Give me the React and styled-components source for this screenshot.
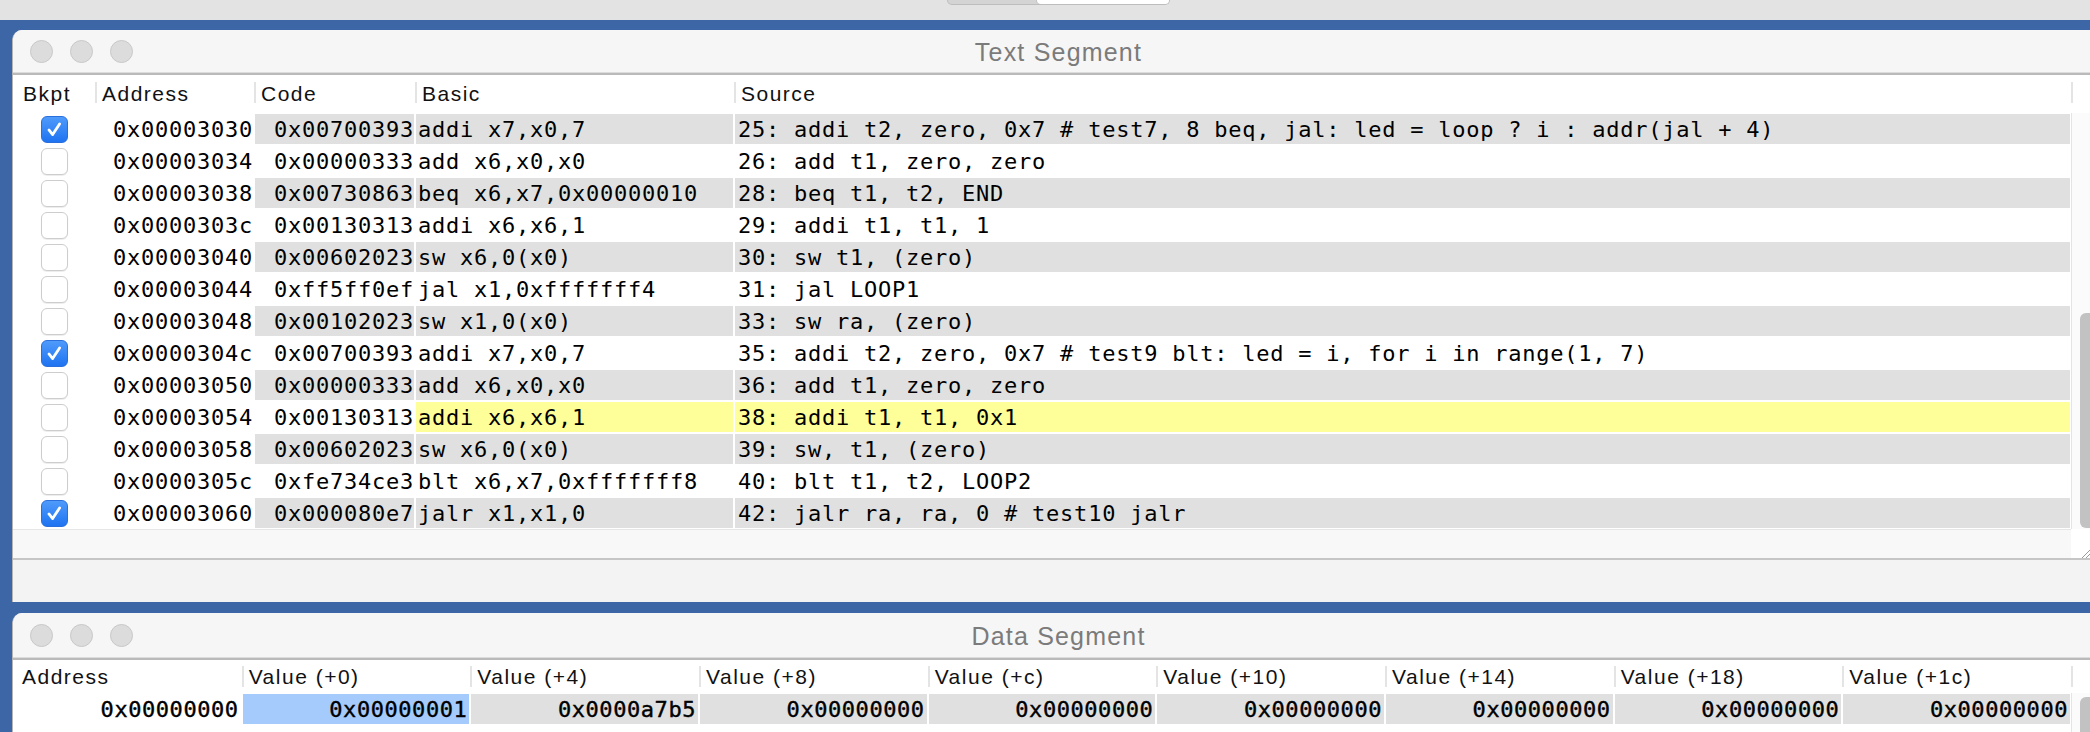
import React from 'react';
import styled, { createGlobalStyle, css } from 'styled-components';

const GlobalStyle = createGlobalStyle`
  html, body { margin: 0; padding: 0; background: #e3e3e3; overflow: hidden; }
  #root { width: 2090px; height: 732px; }
`;

const Page = styled.div`
  width: 2090px;
  height: 732px;
  display: flex;
  flex-direction: column;
  overflow: hidden;
  background: #e3e3e3;
`;

const TopStrip = styled.div`
  height: 20px;
  flex: none;
  display: flex;
  align-items: flex-start;
  padding-left: 947px;
  box-sizing: border-box;
`;

const Segmented = styled.div`
  display: flex;
  height: 5px;
  width: 223px;
  background: #d4d4d4;
  border: 1px solid #bdbdbd;
  border-top: none;
  border-radius: 0 0 8px 8px;
  box-sizing: border-box;
  justify-content: flex-end;
`;

const SegmentOn = styled.div`
  width: 132px;
  height: 4px;
  background: #ffffff;
  border-radius: 0 0 7px 7px;
  box-shadow: -1px 0 0 #c4c4c4;
`;

const Desktop = styled.div`
  flex: 1;
  min-height: 0;
  background: #3d66a6;
  padding: 10px 0 0 12px;
  display: flex;
  flex-direction: column;
  gap: 11px;
  overflow: hidden;
`;

const Window = styled.section`
  flex: none;
  background: #ffffff;
  border-left: 1px solid #b4b4b4;
  border-radius: 10px 0 0 0;
  overflow: hidden;
  display: flex;
  flex-direction: column;
`;

const TitleBar = styled.header`
  height: ${(p) => p.$h}px;
  flex: none;
  background: #f6f6f6;
  display: grid;
  grid-template-columns: 1fr auto 1fr;
  align-items: center;
`;

const Lights = styled.div`
  display: flex;
  gap: 17px;
  padding-left: 17px;
`;

const Light = styled.span`
  width: 23px;
  height: 23px;
  box-sizing: border-box;
  border-radius: 50%;
  background: #dcdcdc;
  border: 1px solid #c8c8c8;
`;

const Title = styled.h1`
  margin: 0;
  padding: 2px 0 0 14px;
  font-family: "Liberation Sans", Arial, sans-serif;
  font-weight: 400;
  font-size: 25px;
  letter-spacing: 1.2px;
  color: #7b7b7b;
`;

const TitleRule = styled.div`
  height: 3px;
  flex: none;
  background: linear-gradient(#dcdcdc 0 1px, #bababa 1px 3px);
`;

const HeaderRow = styled.div`
  display: grid;
  grid-template-columns: ${(p) => p.$cols};
  height: ${(p) => p.$h}px;
  flex: none;
  background: #ffffff;
`;

const HeadCell = styled.div`
  display: flex;
  align-items: center;
  padding-left: ${(p) => p.$pad ?? 7}px;
  font-family: "Liberation Sans", Arial, sans-serif;
  font-size: 21px;
  letter-spacing: 1.5px;
  color: #111;
  white-space: nowrap;
  overflow: hidden;
  ${(p) =>
    p.$sep &&
    css`
      background: linear-gradient(#e4e4e4, #e4e4e4) left ${p.$sepTop}px / 2px 21px no-repeat;
    `}
`;

const BodyArea = styled.div`
  display: grid;
  grid-template-columns: 1fr 19px;
  flex: none;
`;

const Rows = styled.div`
  display: flex;
  flex-direction: column;
`;

const Row = styled.div`
  display: grid;
  grid-template-columns: ${(p) => p.$cols};
  height: 32px;
`;

const Cell = styled.div`
  margin: 1px;
  min-width: 0;
  background: ${(p) => p.$bg || '#ffffff'};
  display: flex;
  align-items: center;
  justify-content: ${(p) => (p.$align === 'right' ? 'flex-end' : p.$align === 'center' ? 'center' : 'flex-start')};
  padding: 0 ${(p) => p.$pr ?? 0}px 0 ${(p) => p.$pl ?? 0}px;
  font-family: "DejaVu Sans Mono", "Liberation Mono", monospace;
  font-size: 22px;
  letter-spacing: ${(p) => (p.$data ? 0.56 : 0.76)}px;
  color: #000;
  white-space: nowrap;
  overflow: hidden;
  ${(p) =>
    p.$data &&
    css`
      -webkit-text-stroke: 0.4px #000;
    `}
`;

const CheckBox = styled.span`
  width: 27px;
  height: 27px;
  box-sizing: border-box;
  border-radius: 6px;
  display: flex;
  align-items: center;
  justify-content: center;
  ${(p) =>
    p.$on
      ? css`
          background: linear-gradient(#4f9bfb, #1f73f1);
          border: 1px solid #2a6fdd;
        `
      : css`
          background: #ffffff;
          border: 1px solid #cdcdcd;
          box-shadow: 0 1px 1px rgba(0, 0, 0, 0.08);
        `}
`;

const VTrack = styled.div`
  background: #fbfbfb;
  border-left: 1px solid #e4e4e4;
  box-sizing: border-box;
  padding: ${(p) => p.$top}px 0 0 8px;
  overflow: hidden;
`;

const Thumb = styled.div`
  width: 10px;
  height: ${(p) => p.$h}px;
  background: #c2c2c2;
  border-radius: 6px 0 0 6px;
`;

const HScroll = styled.div`
  display: grid;
  grid-template-columns: 1fr 19px;
  height: 29px;
  flex: none;
`;

const HTrack = styled.div`
  background: #f8f8f8;
  border-top: 1px solid #e6e6e6;
`;

const Corner = styled.div`
  background: #ffffff;
  display: flex;
  align-items: flex-end;
  justify-content: flex-end;
`;

const BottomEdge = styled.div`
  height: 2px;
  flex: none;
  background: #c6c6c6;
`;

const WindowBase = styled.div`
  height: 42px;
  flex: none;
  background: #f3f3f3;
`;

const DataBody = styled.div`
  display: grid;
  grid-template-columns: 1fr 19px;
  flex: 1;
`;

const TEXT_COLS = '82px 159px 161px 319px 1fr';
const TEXT_HEAD_COLS = '82px 159px 161px 319px 1fr 19px';
const DATA_COLS = 'repeat(9, 1fr)';
const DATA_HEAD_COLS = 'repeat(9, 1fr) 19px';

const GRAY = '#e0e0e0';
const YELLOW = '#ffff99';
const SELECT = '#a4cbfc';

const textRows = [
  { bp: true, addr: '0x00003030', code: '0x00700393', basic: 'addi x7,x0,7', src: '25: addi t2, zero, 0x7 # test7, 8 beq, jal: led = loop ? i : addr(jal + 4)' },
  { addr: '0x00003034', code: '0x00000333', basic: 'add x6,x0,x0', src: '26: add t1, zero, zero' },
  { addr: '0x00003038', code: '0x00730863', basic: 'beq x6,x7,0x00000010', src: '28: beq t1, t2, END' },
  { addr: '0x0000303c', code: '0x00130313', basic: 'addi x6,x6,1', src: '29: addi t1, t1, 1' },
  { addr: '0x00003040', code: '0x00602023', basic: 'sw x6,0(x0)', src: '30: sw t1, (zero)' },
  { addr: '0x00003044', code: '0xff5ff0ef', basic: 'jal x1,0xfffffff4', src: '31: jal LOOP1' },
  { addr: '0x00003048', code: '0x00102023', basic: 'sw x1,0(x0)', src: '33: sw ra, (zero)' },
  { bp: true, addr: '0x0000304c', code: '0x00700393', basic: 'addi x7,x0,7', src: '35: addi t2, zero, 0x7 # test9 blt: led = i, for i in range(1, 7)' },
  { addr: '0x00003050', code: '0x00000333', basic: 'add x6,x0,x0', src: '36: add t1, zero, zero' },
  { hl: true, addr: '0x00003054', code: '0x00130313', basic: 'addi x6,x6,1', src: '38: addi t1, t1, 0x1' },
  { addr: '0x00003058', code: '0x00602023', basic: 'sw x6,0(x0)', src: '39: sw, t1, (zero)' },
  { addr: '0x0000305c', code: '0xfe734ce3', basic: 'blt x6,x7,0xfffffff8', src: '40: blt t1, t2, LOOP2' },
  { bp: true, addr: '0x00003060', code: '0x000080e7', basic: 'jalr x1,x1,0', src: '42: jalr ra, ra, 0 # test10 jalr' },
];

const dataValues = ['0x00000001', '0x0000a7b5', '0x00000000', '0x00000000', '0x00000000', '0x00000000', '0x00000000', '0x00000000'];
const dataHeads = ['Value (+0)', 'Value (+4)', 'Value (+8)', 'Value (+c)', 'Value (+10)', 'Value (+14)', 'Value (+18)', 'Value (+1c)'];

function Check({ on }) {
  return (
    <CheckBox $on={on}>
      {on && (
        <svg width="27" height="27" viewBox="0 0 27 27">
          <path d="M7.5 14 L11.5 19 L19 7.5" fill="none" stroke="#fff" strokeWidth="3" strokeLinecap="round" strokeLinejoin="round" />
        </svg>
      )}
    </CheckBox>
  );
}

function WindowTitle({ h, children }) {
  return (
    <>
      <TitleBar $h={h}>
        <Lights>
          <Light />
          <Light />
          <Light />
        </Lights>
        <Title>{children}</Title>
        <span />
      </TitleBar>
      <TitleRule />
    </>
  );
}

function ResizeGrip() {
  return (
    <svg width="12" height="10" viewBox="0 0 12 10">
      <path d="M4 10 L12 2" stroke="#9a9a9a" strokeWidth="1" />
      <path d="M8 10 L12 6" stroke="#9a9a9a" strokeWidth="1" />
    </svg>
  );
}

function TextSegment() {
  return (
    <Window>
      <WindowTitle h={42}>Text Segment</WindowTitle>
      <HeaderRow $cols={TEXT_HEAD_COLS} $h={38}>
        <HeadCell $pad={10}>Bkpt</HeadCell>
        <HeadCell $sep $sepTop={7}>Address</HeadCell>
        <HeadCell $sep $sepTop={7}>Code</HeadCell>
        <HeadCell $sep $sepTop={7}>Basic</HeadCell>
        <HeadCell $sep $sepTop={7}>Source</HeadCell>
        <HeadCell $sep $sepTop={7} />
      </HeaderRow>
      <BodyArea>
        <Rows>
          {textRows.map((r, i) => {
            const bg = i % 2 === 0 ? GRAY : '#ffffff';
            return (
              <Row key={r.addr} $cols={TEXT_COLS}>
                <Cell $align="center">
                  <Check on={!!r.bp} />
                </Cell>
                <Cell $align="right">{r.addr}</Cell>
                <Cell $align="right" $bg={bg}>{r.code}</Cell>
                <Cell $bg={r.hl ? YELLOW : bg} $pl={2}>{r.basic}</Cell>
                <Cell $bg={r.hl ? YELLOW : bg} $pl={3}>{r.src}</Cell>
              </Row>
            );
          })}
        </Rows>
        <VTrack $top={200}>
          <Thumb $h={215} />
        </VTrack>
      </BodyArea>
      <HScroll>
        <HTrack />
        <Corner>
          <ResizeGrip />
        </Corner>
      </HScroll>
      <BottomEdge />
      <WindowBase />
    </Window>
  );
}

function DataSegment() {
  return (
    <Window>
      <WindowTitle h={44}>Data Segment</WindowTitle>
      <HeaderRow $cols={DATA_HEAD_COLS} $h={33}>
        <HeadCell $pad={9}>Address</HeadCell>
        {dataHeads.map((h) => (
          <HeadCell key={h} $sep $sepTop={6}>{h}</HeadCell>
        ))}
        <HeadCell $sep $sepTop={6} />
      </HeaderRow>
      <DataBody>
        <Rows>
          <Row $cols={DATA_COLS}>
            <Cell $align="right" $data $pr={2}>0x00000000</Cell>
            {dataValues.map((v, i) => (
              <Cell key={i} $align="right" $data $pr={2} $bg={i === 0 ? SELECT : GRAY}>
                {v}
              </Cell>
            ))}
          </Row>
        </Rows>
        <VTrack $top={4}>
          <Thumb $h={80} />
        </VTrack>
      </DataBody>
    </Window>
  );
}

export default function App() {
  return (
    <>
      <GlobalStyle />
      <Page>
        <TopStrip>
          <Segmented>
            <SegmentOn />
          </Segmented>
        </TopStrip>
        <Desktop>
          <TextSegment />
          <DataSegment />
        </Desktop>
      </Page>
    </>
  );
}
